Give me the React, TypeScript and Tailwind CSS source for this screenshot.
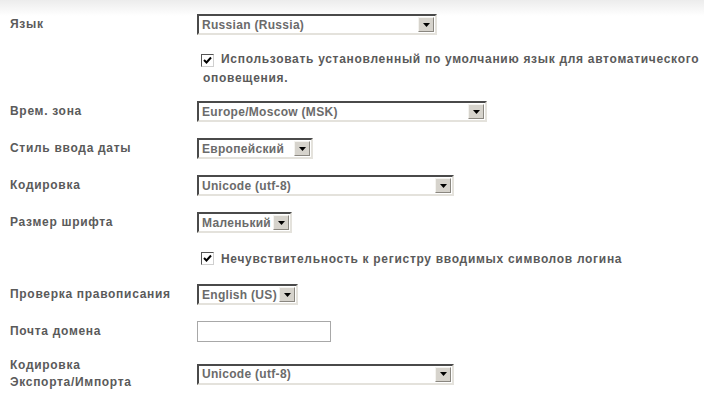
import type { ReactNode } from "react";

function Select({ value, width }: { value: string; width: string }) {
	return (
		<div
			className={`${width} h-[21px] flex items-stretch bg-white border-2 border-t-[#4a4a4a] border-l-[#4a4a4a] border-b-[#e4e2dc] border-r-[#e4e2dc]`}
		>
			<div className="flex-1 flex items-center pl-[3px] overflow-hidden whitespace-nowrap text-[#6b6b6b] tracking-[0.3px]">
				{value}
			</div>
			<div className="w-[16px] my-[1px] mr-[1px] flex items-center justify-center bg-[#d6d3cc] border border-t-[#f4f3ef] border-l-[#f4f3ef] border-b-[#8a8780] border-r-[#8a8780]">
				<svg width="7" height="4" viewBox="0 0 7 4">
					<path d="M0 0h7L3.5 4z" fill="#000" />
				</svg>
			</div>
		</div>
	);
}

function Checkbox() {
	return (
		<span className="inline-flex w-[13px] h-[13px] align-[-2px] items-center justify-center bg-white border border-t-[#555] border-l-[#555] border-b-[#cfcfcf] border-r-[#cfcfcf] mr-[7px]">
			<svg width="9" height="9" viewBox="0 0 9 9">
				<path d="M1 4l2.5 2.5L8 1.5" stroke="#000" strokeWidth="2" fill="none" />
			</svg>
		</span>
	);
}

function Row({ label, height, children }: { label: ReactNode; height: string; children: ReactNode }) {
	return (
		<div className={`flex items-center ${height}`}>
			<div className="w-[187px] shrink-0 text-[#5a5a5a] leading-[17px]">{label}</div>
			{children}
		</div>
	);
}

export default function App() {
	return (
		<div
			className="min-h-[395px] bg-gradient-to-b from-[#ececec] to-white to-[16px] pt-[6px] pl-[10px] text-[12px] font-bold tracking-[0.7px]"
			style={{ fontFamily: '"Liberation Sans", Arial, sans-serif' }}
		>
			<Row label="Язык" height="h-[37px]">
				<Select value="Russian (Russia)" width="w-[240px]" />
			</Row>

			<div className="pl-[193px] pt-[7px] pb-[5px] leading-[19px] text-[#5a5a5a]">
				<span className="ml-[-2px]">
					<Checkbox />
				</span>
				Использовать установленный по умолчанию язык для автоматического оповещения.
			</div>

			<Row label="Врем. зона" height="h-[37px]">
				<Select value="Europe/Moscow (MSK)" width="w-[290px]" />
			</Row>
			<Row label="Стиль ввода даты" height="h-[37px]">
				<Select value="Европейский" width="w-[116px]" />
			</Row>
			<Row label="Кодировка" height="h-[37px]">
				<Select value="Unicode (utf-8)" width="w-[257px]" />
			</Row>
			<Row label="Размер шрифта" height="h-[37px]">
				<Select value="Маленький" width="w-[95px]" />
			</Row>

			<div className="h-[35px] flex items-center pl-[191px] text-[#5a5a5a]">
				<Checkbox />
				Нечувствительность к регистру вводимых символов логина
			</div>

			<Row label="Проверка правописания" height="h-[37px]">
				<Select value="English (US)" width="w-[101px]" />
			</Row>
			<Row label="Почта домена" height="h-[36px]">
				<div className="w-[134px] h-[21px] bg-white border border-[#a8a8a8]" />
			</Row>
			<Row
				label={
					<>
						Кодировка
						<br />
						Экспорта/Импорта
					</>
				}
				height="h-[50px]"
			>
				<Select value="Unicode (utf-8)" width="w-[257px]" />
			</Row>
		</div>
	);
}
